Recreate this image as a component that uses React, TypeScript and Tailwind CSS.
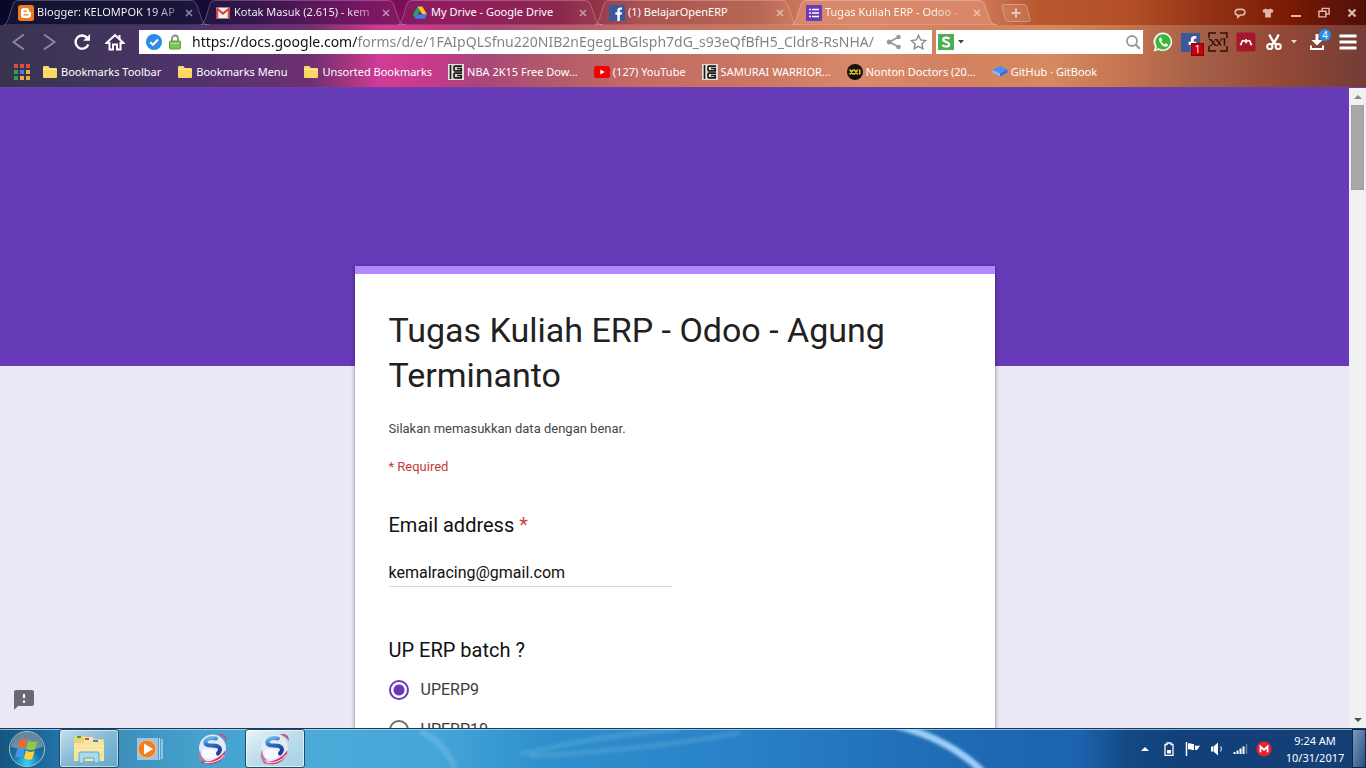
import type { ReactNode } from "react";

/* ---------- favicons ---------- */

function BloggerIcon() {
  return (
    <svg viewBox="0 0 16 16" className="size-4 shrink-0">
      <rect width="16" height="16" rx="2.5" fill="#f0781e" />
      <path
        d="M5.8 3h2.6a2.7 2.7 0 0 1 2.7 2.7c0 .9.3 1.2.9 1.2.7 0 1 .4 1 1v2.2A2.9 2.9 0 0 1 10.1 13H5.8A2.8 2.8 0 0 1 3 10.200V5.800A2.800 2.800 0 0 1 5.800 3Z"
        fill="#fff"
      />
      <path d="M6 6.100h2.300M6 9.900h4" stroke="#f0781e" strokeWidth="1.300" strokeLinecap="round" />
    </svg>
  );
}

function GmailIcon() {
  return (
    <svg viewBox="0 0 16 16" className="size-4 shrink-0">
      <rect x="1" y="2.500" width="14" height="11" rx="1" fill="#f3f1f1" />
      <path d="M1 3.500h2.200V13.500H2a1 1 0 0 1-1-1ZM12.800 3.500H15v9a1 1 0 0 1-1 1h-1.200Z" fill="#d9453a" />
      <path d="M1.800 3.500 8 8.600l6.200-5.100" fill="none" stroke="#d9453a" strokeWidth="2" />
    </svg>
  );
}

function DriveIcon() {
  return (
    <svg viewBox="0 0 16 16" className="size-4 shrink-0">
      <path d="M5.600 1.500 1 9.600l2.300 4.100L8 5.700Z" fill="#22a366" />
      <path d="M5.600 1.500h4.700L15 9.600h-4.600Z" fill="#fcc934" />
      <path d="M5.700 9.600H15l-2.300 4.100H3.300Z" fill="#3d7de8" />
    </svg>
  );
}

function FacebookIcon({ size = "size-4" }: { size?: string }) {
  return (
    <svg viewBox="0 0 16 16" className={`${size} shrink-0`}>
      <rect width="16" height="16" rx="1" fill="#3b5998" />
      <path d="M8.300 16V9.800H6.400V7.300h1.900V5.500c0-2 1.200-3 3-3h1.600v2.300h-1.100c-.8 0-1 .4-1 1v1.500h2.100l-.3 2.500h-1.800V16Z" fill="#fff" />
    </svg>
  );
}

function FormsIcon() {
  return (
    <svg viewBox="0 0 16 16" className="size-4 shrink-0">
      <rect width="16" height="16" rx="1" fill="#6a3ab8" />
      <path d="M6 4.500h7M6 8h7M6 11.500h7M3 4.500h2M3 8h2M3 11.500h2" stroke="#fff" strokeWidth="1.700" />
    </svg>
  );
}

function FolderIcon() {
  return (
    <svg viewBox="0 0 16 14" className="h-3.5 w-4 shrink-0">
      <path d="M1 2a1 1 0 0 1 1-1h4.500l1.300 2H14a1 1 0 0 1 1 1v8a1 1 0 0 1-1 1H2a1 1 0 0 1-1-1Z" fill="#fbd766" />
      <path d="M1 4.500h14" stroke="#fdeaa0" />
    </svg>
  );
}

function PcGamesIcon() {
  return (
    <svg viewBox="0 0 16 16" className="size-4 shrink-0">
      <rect width="16" height="16" fill="#e4ddd8" />
      <path d="M2.500 1v14" stroke="#1b1b1b" strokeWidth="1.600" />
      <path d="M14 2.200H7q-1 0-1 1v2.600q0 1 1 1h6.200V4.500H9M14 9.200H7q-1 0-1 1v2.600q0 1 1 1h6.200v-2.300H9" fill="none" stroke="#1b1b1b" strokeWidth="1.700" />
    </svg>
  );
}

function YoutubeIcon() {
  return (
    <svg viewBox="0 0 16 12" className="h-3 w-4 shrink-0">
      <rect width="16" height="12" rx="2.800" fill="#f40000" />
      <path d="M6.300 3.400v5.200l4.400-2.600Z" fill="#fff" />
    </svg>
  );
}

function XxiIcon() {
  return (
    <svg viewBox="0 0 16 16" className="size-4 shrink-0">
      <circle cx="8" cy="8" r="8" fill="#15120d" />
      <path d="m2.500 5.500 4 5m0-5-4 5M7 5.500l4 5m0-5-4 5M12.800 5.500v5" stroke="#e8c33a" strokeWidth="1.500" />
    </svg>
  );
}

function GitbookIcon() {
  return (
    <svg viewBox="0 0 16 14" className="h-3.5 w-4 shrink-0">
      <path d="M8.500 1 15.500 4.500 8 8.500.500 5Z" fill="#4a8cf5" />
      <path d="M.500 5v2.500L8 11.500V8.500Z" fill="#8ab6fb" />
      <path d="M8 8.500v3l7.500-4v-3Z" fill="#2f6fe0" />
    </svg>
  );
}

/* ---------- tab strip ---------- */

interface Tab {
  title: string;
  icon: ReactNode;
  active?: boolean;
  faded?: boolean;
}

const tabs: Tab[] = [
  { title: "Blogger: KELOMPOK 19 AP", icon: <BloggerIcon />, faded: true },
  { title: "Kotak Masuk (2.615) - kem", icon: <GmailIcon />, faded: true },
  { title: "My Drive - Google Drive", icon: <DriveIcon /> },
  { title: "(1) BelajarOpenERP", icon: <FacebookIcon /> },
  { title: "Tugas Kuliah ERP - Odoo -", icon: <FormsIcon />, active: true, faded: true },
];

function TabItem({ tab }: { tab: Tab }) {
  return (
    <div className="relative flex h-[25px] w-[197px] min-w-0 items-center pl-[10px] pr-[10px]">
      <svg viewBox="0 0 205 25" preserveAspectRatio="none" className="absolute inset-y-0 -left-1 h-full w-[205px]">
        <path
          d="M0 25C3 23 4 20 5 17L9 4Q10 0.500 14 0.500H187Q191 0.500 192.500 4L198 20Q200 25 205 25Z"
          fill={tab.active ? "#d98869" : "#ffffff"}
          fillOpacity={tab.active ? 0.9 : 0.05}
          stroke="#ffffff"
          strokeOpacity={tab.active ? 0.3 : 0.25}
        />
      </svg>
      <div className="relative flex min-w-0 flex-1 items-center gap-[3px]">
        {tab.icon}
        <span
          className={
            tab.faded
              ? "whitespace-nowrap bg-[linear-gradient(to_right,#fff_82%,rgba(255,255,255,0.45))] bg-clip-text text-[11px] text-transparent"
              : "whitespace-nowrap text-[11px] text-white"
          }
        >
          {tab.title}
        </span>
        <button aria-label={`Close ${tab.title}`} className="ml-auto flex size-3 shrink-0 items-center justify-center">
          <svg viewBox="0 0 8 8" className="size-2">
            <path d="m1 1 6 6m0-6-6 6" stroke="#fff" strokeOpacity="0.5" strokeWidth="1.600" />
          </svg>
        </button>
      </div>
    </div>
  );
}

function WindowControls() {
  return (
    <div className="ml-auto flex items-center gap-4 pr-2 text-[#e0b8a6]">
      <button aria-label="Feedback">
        <svg viewBox="0 0 13 12" className="h-3 w-3" fill="none" stroke="currentColor" strokeWidth="1.800">
          <path d="M3.500 8.200C.6 7.800.3 2 4.500 2h4c4.600 0 4.300 6.200 0 6.200H6.800L4.200 10.500V8.200Z" />
        </svg>
      </button>
      <button aria-label="Skins">
        <svg viewBox="0 0 13 12" className="h-3 w-3" fill="currentColor">
          <path d="M4 1q2.500 2 5 0l3.500 2-1.300 3-1.600-.6V11H3.400V5.400L1.800 6 .5 3Z" />
        </svg>
      </button>
      <button aria-label="Minimize">
        <svg viewBox="0 0 12 12" className="size-3">
          <path d="M1 9h10" stroke="currentColor" strokeWidth="2" />
        </svg>
      </button>
      <button aria-label="Restore">
        <svg viewBox="0 0 13 12" className="h-3 w-3" fill="none" stroke="currentColor" strokeWidth="1.600">
          <path d="M4.500 4V1H12v6H8.500M1 4.200h7.500v6H1Z" />
        </svg>
      </button>
      <button aria-label="Close window">
        <svg viewBox="0 0 12 12" className="size-3">
          <path d="m2.500 2.500 7 7m0-7-7 7" stroke="currentColor" strokeWidth="2.200" />
        </svg>
      </button>
    </div>
  );
}

/* ---------- toolbar ---------- */

function Toolbar() {
  return (
    <div className="flex h-[34px] items-center pl-[11px] pr-[9px]">
      <nav className="flex items-center gap-[14px]">
        <button aria-label="Back">
          <svg viewBox="0 0 16 18" className="h-[18px] w-4" fill="none" stroke="#8d84a3" strokeWidth="2">
            <path d="M13 1.500 2.500 9 13 16.500" />
          </svg>
        </button>
        <button aria-label="Forward">
          <svg viewBox="0 0 16 18" className="h-[18px] w-4" fill="none" stroke="#8d84a3" strokeWidth="2">
            <path d="M3 1.500 13.500 9 3 16.500" />
          </svg>
        </button>
        <button aria-label="Reload" className="ml-0.5">
          <svg viewBox="0 0 18 18" className="size-[18px]">
            <path d="M14.500 5.200A6.600 6.600 0 1 0 15.300 11.500" fill="none" stroke="#fff" strokeWidth="2.300" />
            <path d="M17 1v6.800h-6.800Z" fill="#fff" />
          </svg>
        </button>
        <button aria-label="Home">
          <svg viewBox="0 0 20 18" className="h-[18px] w-5" fill="none" stroke="#fff" strokeWidth="2">
            <path d="M1.500 10 10 2l8.500 8H15.500v6.500H12v-5H8v5H4.500V10Z" />
            <path d="M14.500 2v4" />
          </svg>
        </button>
      </nav>

      <div className="ml-[14px] flex h-6 min-w-0 flex-1 items-center bg-white pl-[7px] pr-[5px]">
        <svg viewBox="0 0 16 16" className="size-4 shrink-0">
          <circle cx="8" cy="8" r="8" fill="#2d8ae8" />
          <path d="m4.300 8.200 2.700 2.500L12 5.500" fill="none" stroke="#fff" strokeWidth="2.200" />
        </svg>
        <svg viewBox="0 0 12 16" className="ml-[7px] h-4 w-3 shrink-0">
          <path d="M3 8V4.500a3 3 0 0 1 6 0V8" fill="none" stroke="#8b8f8b" strokeWidth="1.800" />
          <rect x=".5" y="7" width="11" height="8" rx="1" fill="#7fc458" stroke="#5da03b" />
          <path d="M1.500 9.500h9" stroke="#b5e29a" />
        </svg>
        <input
          aria-label="Address"
          defaultValue="https://docs.google.com/forms/d/e/1FAIpQLSfnu220NIB2nEgegLBGlsph7dG_s93eQfBfH5_Cldr8-RsNHA/"
          className="ml-[11px] min-w-0 flex-1 bg-[linear-gradient(to_right,#111_165px,#808080_165px)] bg-clip-text text-sm text-transparent outline-none"
        />
        <button aria-label="Share">
          <svg viewBox="0 0 16 16" className="size-4">
            <path d="M12.500 3 3.500 8l9 5" fill="none" stroke="#9a9a9a" strokeWidth="1.800" />
            <circle cx="12.500" cy="3" r="2.300" fill="#9a9a9a" />
            <circle cx="3.300" cy="8" r="2.500" fill="#9a9a9a" />
            <circle cx="12.500" cy="13" r="2.300" fill="#9a9a9a" />
          </svg>
        </button>
        <button aria-label="Bookmark" className="ml-2">
          <svg viewBox="0 0 17 16" className="h-4 w-[17px]">
            <path d="m8.500 1.300 2.100 4.600 5 .6-3.700 3.400 1 4.900-4.400-2.500-4.400 2.500 1-4.900L1.400 6.500l5-.6Z" fill="none" stroke="#8c8c8c" strokeWidth="1.400" />
          </svg>
        </button>
      </div>

      <div className="ml-1 flex h-6 w-[207px] shrink-0 items-center bg-white px-0.5">
        <svg viewBox="0 0 16 16" className="size-4 shrink-0">
          <rect width="16" height="16" fill="#4caf50" />
          <path d="M11.300 5C10.500 3 5.200 3 5.200 5.600S11.200 7.800 11.200 10.400 5.500 13.200 4.600 10.800" fill="none" stroke="#fff" strokeWidth="2.200" />
        </svg>
        <svg viewBox="0 0 6 4" className="ml-1 h-1 w-1.5 shrink-0">
          <path d="M0 0h6L3 3.500Z" fill="#444" />
        </svg>
        <input aria-label="Search" className="min-w-0 flex-1 bg-transparent px-1 text-sm outline-none" />
        <button aria-label="Run search">
          <svg viewBox="0 0 16 16" className="size-4" fill="none" stroke="#999" strokeWidth="1.800">
            <circle cx="7" cy="7" r="5" />
            <path d="m10.800 10.800 4 4" strokeWidth="2.200" />
          </svg>
        </button>
      </div>

      <div className="ml-[10px] flex shrink-0 items-center gap-2">
        <button aria-label="WhatsApp">
          <svg viewBox="0 0 20 20" className="size-5">
            <path d="M10.200.5a9.300 9.300 0 1 1-4.600 17.600L.6 19.500 2 14.800A9.300 9.300 0 0 1 10.200.5Z" fill="#f4faf2" />
            <path d="M10.200 2.200a7.600 7.600 0 1 1-4.300 14L3 17l.9-2.800A7.600 7.600 0 0 1 10.200 2.200Z" fill="#3cb739" />
            <path d="M7.200 5.500c-1.500.9-1.500 2.500-.3 4.700s3.300 4 5.500 4.500c1.400.2 2.600-.7 2.500-2.200L12.600 11.300l-1 1.200c-1.400-.5-2.700-1.800-3.300-3.200l.9-1.100L8.300 5.700Z" fill="#fff" />
          </svg>
        </button>
        <button aria-label="Facebook, 1 notification" className="relative">
          <FacebookIcon size="size-[19px]" />
          <span className="absolute -bottom-1 -right-1 flex h-[13px] w-[13px] items-center justify-center border border-[#8d0008] bg-[#c4000b] text-[10px] leading-none text-white">
            1
          </span>
        </button>
        <button aria-label="Cinema XXI">
          <svg viewBox="0 0 20 20" className="size-5" fill="none" stroke="#2c120d">
            <path d="M8 1H1v5M12 1h7v5M1 14v5h7M19 14v5h-7" strokeWidth="1.500" />
            <path d="m2.500 7.500 5 6M8.500 7.500l4.500 6M16.500 6.500v7" strokeWidth="1.500" />
            <path d="m7.500 7-4.500 7M13.500 7 9 14M.5 7.500h3M7 7.500h2.500M12.500 7h5M1.500 13.500h2.500M7 13.500h3" strokeWidth="0.900" />
          </svg>
        </button>
        <button aria-label="Mendeley">
          <svg viewBox="0 0 20 20" className="size-5">
            <rect x="0.500" y="0.500" width="19" height="19" rx="2" fill="#a3182b" />
            <path d="M5.500 12.300c-.2-2.300.3-3.600 1.700-3.900 1.400 0 1.800 1 2.800 2.200 1-1.200 1.400-2.200 2.800-2.200 1.400.3 1.900 1.600 1.700 3.900" fill="none" stroke="#fff" strokeWidth="1.500" />
            <circle cx="10" cy="8.200" r="1.200" fill="#fff" />
            <circle cx="4.800" cy="12.300" r="1.100" fill="#fff" />
            <circle cx="15.200" cy="12.300" r="1.100" fill="#fff" />
          </svg>
        </button>
        <button aria-label="Screenshot" className="ml-px flex items-center gap-2">
          <svg viewBox="0 0 18 18" className="size-[18px]" fill="none" stroke="#fff">
            <path d="M4.500 1.500Q6 6.500 12 12.500M13.500 1.500Q12 6.500 6 12.500" strokeWidth="2.500" />
            <circle cx="4.800" cy="13.500" r="2.600" strokeWidth="2" />
            <circle cx="13.200" cy="13.500" r="2.600" strokeWidth="2" />
          </svg>
          <svg viewBox="0 0 6 4" className="h-1 w-1.5">
            <path d="M0 0h6L3 3.500Z" fill="#ecd5cc" />
          </svg>
        </button>
        <button aria-label="Downloads, 4 active" className="relative ml-1">
          <svg viewBox="0 0 18 18" className="size-[18px]" fill="none" stroke="#fff">
            <path d="M8 1v7" strokeWidth="3" />
            <path d="M2.500 7h11L8 12.500Z" fill="#fff" stroke="none" />
            <path d="M2 12.500V16h12v-3.500" strokeWidth="2" />
          </svg>
          <span className="absolute -right-1 -top-1 flex size-3 items-center justify-center rounded-full bg-[#2a8be6] text-[10px] leading-none text-white">
            4
          </span>
        </button>
        <button aria-label="Menu" className="ml-1">
          <svg viewBox="0 0 18 18" className="size-[18px]">
            <path d="M.5 3h17M.5 9h17M.5 15h17" stroke="#fff" strokeWidth="3" />
          </svg>
        </button>
      </div>
    </div>
  );
}

/* ---------- bookmarks ---------- */

const bookmarks: { label: string; icon: ReactNode }[] = [
  { label: "Bookmarks Toolbar", icon: <FolderIcon /> },
  { label: "Bookmarks Menu", icon: <FolderIcon /> },
  { label: "Unsorted Bookmarks", icon: <FolderIcon /> },
  { label: "NBA 2K15 Free Dow...", icon: <PcGamesIcon /> },
  { label: "(127) YouTube", icon: <YoutubeIcon /> },
  { label: "SAMURAI WARRIOR...", icon: <PcGamesIcon /> },
  { label: "Nonton Doctors (20...", icon: <XxiIcon /> },
  { label: "GitHub · GitBook", icon: <GitbookIcon /> },
];

const appColors = ["#d8503f", "#d8503f", "#d8503f", "#2f9e5b", "#3d7de8", "#e8b13a", "#2f9e5b", "#e8b13a", "#e8b13a"];

function BookmarksBar() {
  return (
    <div className="flex h-[28px] items-center gap-3 pb-0.5 pl-[14px]">
      <button aria-label="Apps" className="grid size-4 shrink-0 grid-cols-3 gap-0.5">
        {appColors.map((color, i) => (
          <span key={i} className="size-1" style={{ backgroundColor: color }} />
        ))}
      </button>
      <div className="flex items-center gap-4">
        {bookmarks.map((b) => (
          <a key={b.label} href="#" className="flex items-center gap-[3px] whitespace-nowrap text-[11px] text-white">
            {b.icon}
            {b.label}
          </a>
        ))}
      </div>
    </div>
  );
}

function BrowserChrome() {
  return (
    <header className="shrink-0 font-['Noto_Sans','Open_Sans',sans-serif]">
      <div className="flex h-[25px] bg-[linear-gradient(to_right,#08082a_0px,#0d0930_180px,#2a0a44_250px,#750a5c_370px,#8b1256_450px,#861c46_560px,#a44a48_640px,#b5604a_760px,#d58466_820px,#cf7a58_980px,#b9572f_1040px,#b24f27_1130px,#8f2f12_1220px,#7a1a06_1290px,#4f0f08_1366px)] pl-2">
        {tabs.map((tab) => (
          <TabItem key={tab.title} tab={tab} />
        ))}
        <button aria-label="New tab" className="ml-1.5 flex h-[25px] items-center">
          <svg viewBox="0 0 32 18" className="h-[18px] w-8">
            <path d="M5 .5h20q2 0 2.600 2l3.400 13q.5 2-2 2H9q-2 0-2.600-2L3 2.500Q2.500.5 5 .5Z" fill="#fff" fillOpacity="0.1" stroke="#fff" strokeOpacity="0.3" />
            <path d="M12.500 9h9M17 4.500v9" stroke="#fff" strokeOpacity="0.6" strokeWidth="2" />
          </svg>
        </button>
        <WindowControls />
      </div>
      <div className="border-b border-[#6b3fae] bg-[linear-gradient(to_right,#39334f_0px,#40355a_90px,#52326e_200px,#6e3070_310px,#a8347f_350px,#d13c98_380px,#c63a8a_430px,#a8467a_480px,#b35c68_560px,#c46c66_640px,#cb7762_760px,#d98a6a_860px,#d3815f_960px,#d6895f_1050px,#c37350_1130px,#a55f47_1200px,#944936_1280px,#733c36_1366px)]">
        <Toolbar />
        <BookmarksBar />
      </div>
    </header>
  );
}

/* ---------- form page ---------- */

function RadioOption({ label, checked }: { label: string; checked?: boolean }) {
  return (
    <label className="flex h-10 items-center gap-3 text-base text-[#3c3c3c]">
      <input
        type="radio"
        name="batch"
        defaultChecked={checked}
        className="size-5 shrink-0 appearance-none rounded-full border-2 border-[#6e6e6e] checked:border-[#673ab7] checked:bg-[radial-gradient(circle,#673ab7_5px,transparent_6px)]"
      />
      {label}
    </label>
  );
}

function FormPage() {
  return (
    <main className="flex min-h-0 flex-1 font-[Roboto,sans-serif]">
      <div className="relative min-w-0 flex-1 overflow-hidden bg-[#ebe7f5] bg-[linear-gradient(#673ab7,#673ab7)] bg-[length:100%_278px] bg-no-repeat px-4 pt-[178px]">
        <form className="mx-auto max-w-[640px] border-t-8 border-[#b388ff] bg-white px-[34px] pb-8 pt-[34px] shadow-[0_1px_4px_rgba(0,0,0,0.45)]">
          <h1 className="text-[34px] leading-[45px] text-[#212121]">Tugas Kuliah ERP - Odoo - Agung Terminanto</h1>
          <p className="mt-[21px] text-[13px] leading-5 text-[#454545]">Silakan memasukkan data dengan benar.</p>
          <p className="mt-[18px] text-[13px] leading-5 text-[#c43b33]">* Required</p>
          <label htmlFor="email" className="mt-9 block text-xl leading-[25px] text-[#111]">
            Email address <span className="text-[#d0433b]">*</span>
          </label>
          <input
            id="email"
            type="email"
            defaultValue="kemalracing@gmail.com"
            className="mt-[21px] block h-7 w-[283px] border-b border-[#d8d8d8] text-base text-[#111] outline-none"
          />
          <fieldset className="mt-[51px]">
            <legend className="text-xl leading-[25px] text-[#111]">UP ERP batch ?</legend>
            <div className="mt-[7px]">
              <RadioOption label="UPERP9" checked />
              <RadioOption label="UPERP10" />
            </div>
          </fieldset>
        </form>
        <button aria-label="Report a problem" className="absolute bottom-[17px] left-[13px]">
          <svg viewBox="0 0 22 22" className="size-[22px]">
            <path d="M3 1h16a2 2 0 0 1 2 2v12a2 2 0 0 1-2 2H5l-4 4V3a2 2 0 0 1 2-2Z" fill="#6c6874" />
            <path d="M11 5v4M11 11.500v2.300" stroke="#fff" strokeWidth="2.200" />
          </svg>
        </button>
      </div>
      <div className="flex w-[17px] shrink-0 flex-col items-center bg-[#f1f1f1]">
        <button aria-label="Scroll up" className="flex h-[17px] w-full shrink-0 items-center justify-center">
          <svg viewBox="0 0 8 4" className="h-1 w-2">
            <path d="M0 4h8L4 0Z" fill="#8a8a8a" />
          </svg>
        </button>
        <div className="h-[85px] w-[13px] border border-[#a0a0a0] bg-[#a8a8a8]" />
        <button aria-label="Scroll down" className="mt-auto flex h-[17px] w-full shrink-0 items-center justify-center">
          <svg viewBox="0 0 8 4" className="h-1 w-2">
            <path d="M0 0h8L4 4Z" fill="#505050" />
          </svg>
        </button>
      </div>
    </main>
  );
}

/* ---------- taskbar ---------- */

function BaiduIcon() {
  return (
    <svg viewBox="0 0 32 32" className="size-8">
      <defs>
        <linearGradient id="ribbon" x1="0" y1="0" x2="0.300" y2="1">
          <stop offset="0" stopColor="#7cc4ee" />
          <stop offset="0.400" stopColor="#2a78c8" />
          <stop offset="1" stopColor="#1d3f94" />
        </linearGradient>
      </defs>
      <ellipse cx="15.500" cy="15.500" rx="13.500" ry="14" fill="#e3eaf6" />
      <ellipse cx="12" cy="21" rx="8" ry="5" fill="#f8faff" />
      <path d="M21 1.500C26 0 31 2.500 29.500 8.500 28.500 5 25.500 2.800 21 1.500Z" fill="#b8568e" />
      <path d="M19 5.500C12 3.500 7.500 7 8.500 10.500 10 14 16.500 11.500 20.500 13.200 24 14.800 23.500 18 21 20.500" fill="none" stroke="url(#ribbon)" strokeWidth="4" strokeLinecap="round" />
      <path d="M28.500 17c0 7-6 13.500-13.500 14C9.500 31.500 5 31 3.500 28.500c5 .5 9 .3 13-1.500C22 24.500 26 21.500 28.500 17Z" fill="#d32f63" />
      <path d="M4 28.500C1.200 25 1.500 20 3 16.500c.2 4 1.700 7.500 4.500 10.500Z" fill="#c07aa4" />
      <path d="M7 29.500c8.500.8 16-1.500 20-7.500" fill="none" stroke="#f6dce6" strokeWidth="1.200" />
    </svg>
  );
}

function ExplorerIcon() {
  return (
    <svg viewBox="0 0 34 32" className="h-8 w-[34px]">
      <path d="M2 5 4 3h8l2 3h18v22H2Z" fill="#ecd47b" />
      <path d="M12 4h9l1 3h9v6H12Z" fill="#f6e7a8" />
      <path d="M5 3h4v2H5Z" fill="#3aa83a" />
      <path d="M13 5h4v2h-4Z" fill="#c85032" />
      <path d="M21 7h5v2h-5Z" fill="#4b83c6" />
      <path d="M2 10h30v18H2Z" fill="#f7e399" />
      <path d="M2 13h30M2 17h30" stroke="#fbf0c0" />
      <path d="M7 30v-9q0-2 2-2h16q2 0 2 2v9h-5v-5H12v5Z" fill="#a9dbef" stroke="#5ba7cc" />
    </svg>
  );
}

function Taskbar() {
  return (
    <footer className="relative flex h-10 shrink-0 items-stretch overflow-hidden border-t border-[#173a5c] bg-[linear-gradient(to_right,#155580_0px,#2270a4_55px,#3d8fbb_120px,#45a2cd_200px,#4baad8_330px,#45a5d8_440px,#2f90cd_540px,#2a83c8_720px,#2375bb_860px,#1e69b2_980px,#1c63ad_1080px,#134a86_1125px,#114079_1180px,#143f75_1366px)] font-['Noto_Sans','Open_Sans',sans-serif] shadow-[inset_0_1px_0_rgba(190,225,245,0.7)]">
      <svg viewBox="0 0 1366 40" preserveAspectRatio="none" className="pointer-events-none absolute inset-0 size-full">
        <defs>
          <filter id="soft" x="-20%" y="-50%" width="140%" height="200%">
            <feGaussianBlur stdDeviation="1.800" />
          </filter>
        </defs>
        <g filter="url(#soft)" fill="none" stroke="#bfe4fb">
          <path d="M895-4Q950 10 985 46" stroke="#9ccdf8" strokeWidth="7" />
          <path d="M520 26Q600 6 680 0" strokeOpacity="0.15" strokeWidth="5" />
          <path d="M420 2Q445 15 455 40" strokeOpacity="0.2" strokeWidth="6" />
          <path d="M530 28Q640 22 740 4" strokeOpacity="0.15" strokeWidth="5" />
        </g>
      </svg>
      <button aria-label="Start" className="relative ml-2 flex w-[38px] items-center justify-center">
        <svg viewBox="0 0 38 38" className="size-[38px]">
          <defs>
            <radialGradient id="orb" cx="50%" cy="90%" r="80%">
              <stop offset="0" stopColor="#36d3f5" />
              <stop offset="0.500" stopColor="#1873a8" />
              <stop offset="1" stopColor="#27506f" />
            </radialGradient>
          </defs>
          <circle cx="19" cy="19" r="17.500" fill="url(#orb)" stroke="#9cc6dd" />
          <path d="M3 17a16 15 0 0 1 32 0q-16 5-32 0Z" fill="#fff" fillOpacity="0.300" />
          <path d="M11.500 10.500q4-3 7.500-.5l-2 8.200q-3.500-2.300-7.500.2Z" fill="#ee6a2c" />
          <path d="M20.300 10.500q4 2.800 9.200.6l-2.500 8.400q-4.500 2-8.700-.8Z" fill="#94c83d" />
          <path d="M9 19.800q4-2.500 7.700 0l-2 8q-3.500-2.200-7.700.2Z" fill="#3d9be3" />
          <path d="M18 20.300q4 2.700 8.600.8L24.300 29q-4.300 2-8.300-.7Z" fill="#fcd13c" />
        </svg>
      </button>
      <button aria-label="Windows Explorer" className="relative ml-[13px] flex w-[60px] items-center justify-center rounded-[3px] border border-[#1e4d6b] bg-linear-to-br from-[#c5dfec] via-[#86b9d3] to-[#5fa9cd] shadow-[inset_0_0_0_1px_rgba(255,255,255,0.5)]">
        <ExplorerIcon />
      </button>
      <button aria-label="Windows Media Player" className="relative flex w-[62px] items-center justify-center">
        <svg viewBox="0 0 28 26" className="h-[26px] w-7">
          <rect x="1" y="2" width="21" height="22" fill="#9bc4e2" />
          <path d="M23.500 2v22M26 3v20" stroke="#b9dcf0" strokeWidth="1.300" />
          <circle cx="11" cy="13" r="9" fill="#ee7f22" stroke="#f7c08c" />
          <path d="M8 7.500v11l9-5.500Z" fill="#fff" />
        </svg>
      </button>
      <button aria-label="Baidu Browser" className="relative flex w-16 items-center justify-center">
        <BaiduIcon />
      </button>
      <button aria-label="Baidu Browser window" className="relative flex w-[60px] items-center justify-center rounded-[3px] border border-[#1e4d6b] bg-linear-to-br from-[#eaf5fa] via-[#bcdcea] to-[#a5d2e6] shadow-[inset_0_0_0_1px_rgba(255,255,255,0.6)]">
        <BaiduIcon />
      </button>

      <div className="relative ml-auto flex items-center">
        <button aria-label="Show hidden icons">
          <svg viewBox="0 0 8 4" className="h-1 w-2">
            <path d="M0 4h8L4 0Z" fill="#fff" />
          </svg>
        </button>
        <svg viewBox="0 0 10 14" className="ml-[15px] h-3.5 w-2.5">
          <path d="M3 1h4v1.500h2V13.300H1V2.500h2Z" fill="none" stroke="#fff" strokeWidth="1.300" />
          <path d="M3 8h4v3.500H3Z" fill="#fff" />
        </svg>
        <svg viewBox="0 0 16 14" className="ml-[11px] h-3.5 w-4">
          <path d="M1.500 0v14" stroke="#fff" strokeWidth="1.500" />
          <path d="M3 1.500c3-1 4 1 6 .5V8C7 8.500 6 6.500 3 7.500ZM10 3.500c2 .5 3 .3 5 0l-1.500 2.500L12 8H10Z" fill="#fff" />
        </svg>
        <svg viewBox="0 0 14 14" className="ml-[9px] size-3.5">
          <path d="M1 4.500h2V9.500H1ZM3.500 4.500 8 .5v13L3.500 9.500Z" fill="#fff" />
          <path d="M10.500 4.500q2 2.500 0 5" fill="none" stroke="#9bb8d6" strokeWidth="1.300" />
        </svg>
        <svg viewBox="0 0 15 12" className="ml-[9px] h-3 w-[15px]">
          <path d="M1.500 9v2M4.500 7.500V11M7.500 5.500V11M10.500 3.500V11" stroke="#fff" strokeWidth="2" />
          <path d="M13.500 1v10" stroke="#6183a9" strokeWidth="1.500" />
        </svg>
        <svg viewBox="0 0 16 16" className="ml-2 size-4">
          <circle cx="8" cy="8" r="7.600" fill="#e0252f" />
          <path d="M4.500 11.300V5.500L8 8.700l3.500-3.200v5.800" fill="none" stroke="#fff" strokeWidth="1.800" />
        </svg>
        <time className="ml-[13px] w-[60px] text-center text-[11px] leading-[17px] text-white">
          9:24 AM
          <br />
          10/31/2017
        </time>
        <button aria-label="Show desktop" className="ml-[7px] h-full w-3.5 border border-[#0c2748] bg-linear-to-br from-[#7d9cbb] to-[#264f80]" />
      </div>
    </footer>
  );
}

export default function App() {
  return (
    <div className="flex h-screen flex-col overflow-hidden">
      <BrowserChrome />
      <FormPage />
      <Taskbar />
    </div>
  );
}
